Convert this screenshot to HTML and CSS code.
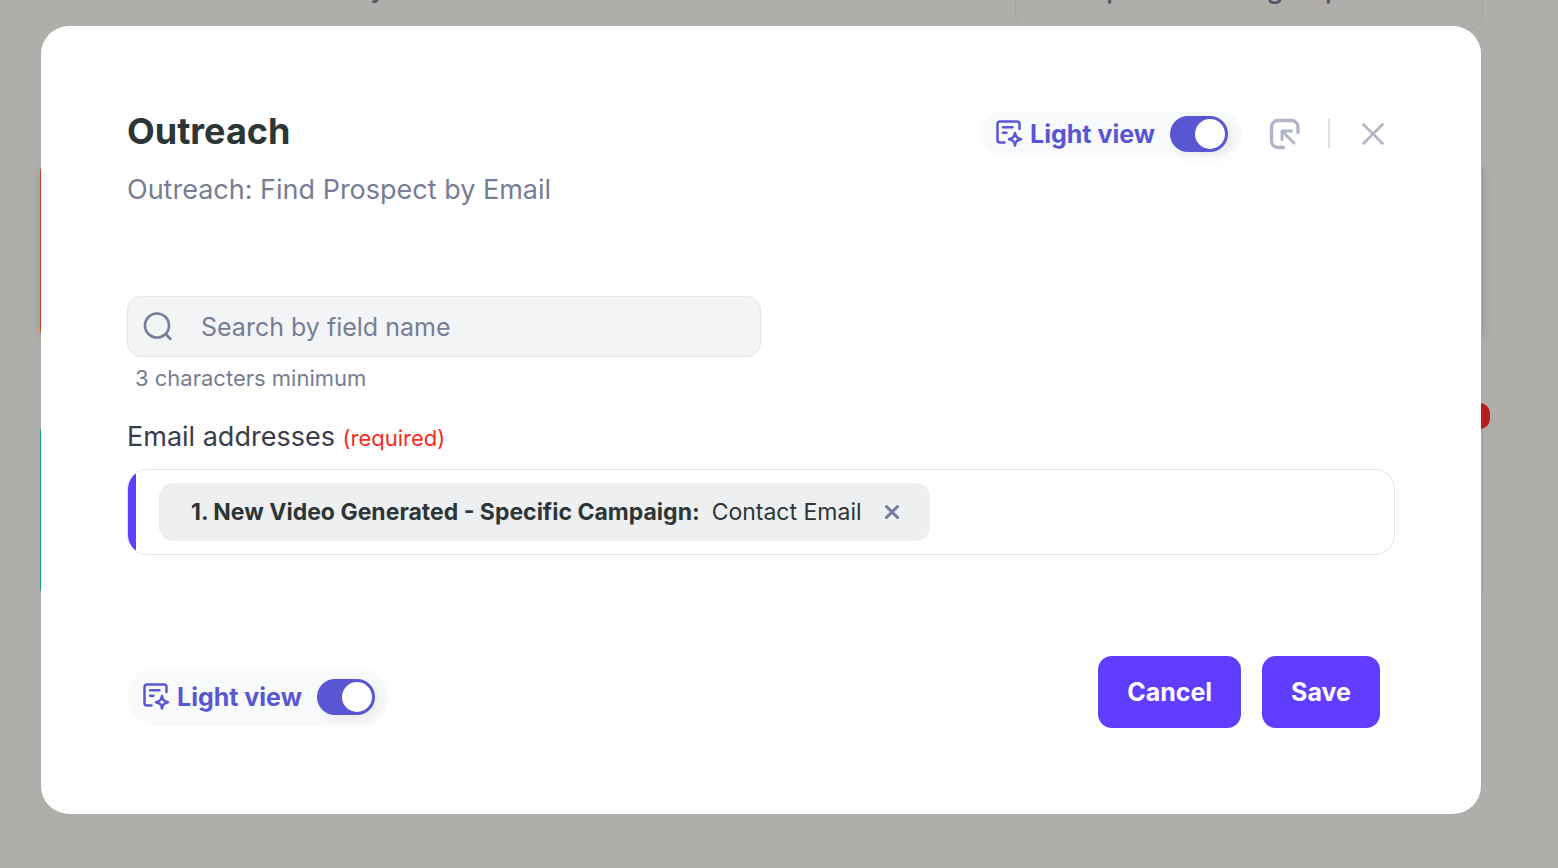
FILE: index.html
```html
<!DOCTYPE html>
<html lang="en">
<head>
  <meta charset="UTF-8">
  <title>Outreach</title>
  <meta name="viewport" content="width=device-width, initial-scale=1.0">
  <link rel="stylesheet" href="styles.css">
</head>
<body>

  <!-- page behind the dialog -->
  <div class="backdrop" aria-hidden="true">
    <div class="page-title">y</div>
    <div class="hint-card"><span>p</span><span>g</span><span>p</span></div>
    <div class="step step-trigger"></div>
    <div class="step step-action"></div>
    <div class="error-badge"></div>
  </div>

  <main class="modal" role="dialog" aria-labelledby="title">
    <header class="modal-header">
      <div>
        <h1 id="title">Outreach</h1>
        <p class="subtitle">Outreach: Find Prospect by Email</p>
      </div>
      <div class="header-tools">
        <label class="light-view">
          <svg class="view-icon" viewBox="0 0 28 28" fill="none" stroke="currentColor" stroke-width="2.5" stroke-linecap="round" stroke-linejoin="round">
            <path d="M9.500 22.500H5A2.500 2.500 0 0 1 2.500 20V4A2.500 2.500 0 0 1 5 1.500H22A2.500 2.500 0 0 1 24.500 4V9"/>
            <path d="M8 7.300H17.500M8 12.800H11.500"/>
            <path d="M20 13C20.800 17 21.800 18.200 26 19.200C21.800 20.200 20.800 21.400 20 25.400C19.200 21.400 18.200 20.200 14 19.200C18.200 18.200 19.200 17 20 13Z"/>
          </svg>
          <span>Light view</span>
          <input type="checkbox" class="switch" checked>
        </label>
        <button type="button" class="icon-btn dock-btn" aria-label="Dock window">
          <svg width="32" height="32" viewBox="0 0 32 32" fill="none" stroke="currentColor" stroke-width="3.400" stroke-linecap="round" stroke-linejoin="round">
            <path d="M14.500 29.500H9A6.500 6.500 0 0 1 2.500 23V9A6.500 6.500 0 0 1 9 2.500H22.500A6.500 6.500 0 0 1 29 9V14.500"/>
            <path d="M13 21.500V13H22.500M13.500 13.500L25 25" stroke-width="3"/>
          </svg>
        </button>
        <span class="divider"></span>
        <button type="button" class="icon-btn" aria-label="Close">
          <svg width="24" height="24" viewBox="0 0 24 24" fill="none" stroke="currentColor" stroke-width="2.600" stroke-linecap="round">
            <path d="M2.500 2.500L21.500 21.500M21.500 2.500L2.500 21.500"/>
          </svg>
        </button>
      </div>
    </header>

    <div class="search">
      <svg width="32" height="32" viewBox="0 0 32 32" fill="none" stroke="currentColor" stroke-width="2.600" stroke-linecap="round">
        <circle cx="15" cy="14.500" r="12"/>
        <path d="M23.500 23L28.500 28"/>
      </svg>
      <input type="search" id="search" placeholder="Search by field name" aria-label="Search by field name">
    </div>
    <p class="hint">3 characters minimum</p>

    <div class="field-label" id="email-label">Email addresses <span class="required">(required)</span></div>
    <div class="field" role="group" aria-labelledby="email-label">
      <div class="chip">
        <strong>1. New Video Generated - Specific Campaign:</strong>
        <span>Contact Email</span>
        <button type="button" class="chip-remove" aria-label="Remove">
          <svg width="16" height="16" viewBox="0 0 16 16" fill="none" stroke="currentColor" stroke-width="3" stroke-linecap="round">
            <path d="M2.500 2.500L13.500 13.500M13.500 2.500L2.500 13.500"/>
          </svg>
        </button>
      </div>
    </div>

    <footer class="modal-footer">
      <label class="light-view light-view-tall">
        <svg class="view-icon" viewBox="0 0 28 28" fill="none" stroke="currentColor" stroke-width="2.5" stroke-linecap="round" stroke-linejoin="round">
          <path d="M9.500 22.500H5A2.500 2.500 0 0 1 2.500 20V4A2.500 2.500 0 0 1 5 1.500H22A2.500 2.500 0 0 1 24.500 4V9"/>
          <path d="M8 7.300H17.500M8 12.800H11.500"/>
          <path d="M20 13C20.800 17 21.800 18.200 26 19.200C21.800 20.200 20.800 21.400 20 25.400C19.200 21.400 18.200 20.200 14 19.200C18.200 18.200 19.200 17 20 13Z"/>
        </svg>
        <span>Light view</span>
        <input type="checkbox" class="switch" checked>
      </label>
      <div class="actions">
        <button type="button" class="btn">Cancel</button>
        <button type="button" class="btn">Save</button>
      </div>
    </footer>
  </main>

</body>
</html>
```
FILE: styles.css
```css
* {
  box-sizing: border-box;
}

body {
  margin: 0;
  padding: 26px 77px 54px 41px;
  background: #b0aeaa;
  font-family: Inter, sans-serif;
  color: #2d3636;
}

h1,
p {
  margin: 0;
}

button {
  font-family: inherit;
  border: 0;
  cursor: pointer;
}

svg {
  display: block;
  flex: none;
}

/* page behind */
.backdrop {
  position: absolute;
  inset: 0;
  overflow: hidden;
  color: #535867;
  font-size: 28px;
  font-weight: 500;
  line-height: 32px;
}

.page-title {
  position: absolute;
  top: -29px;
  left: 370px;
}

.hint-card {
  position: absolute;
  top: -40px;
  left: 1015px;
  right: 75px;
  height: 72px;
  padding: 11px 140px 0 90px;
  display: flex;
  justify-content: space-between;
  border: 1px solid #a2a3a3;
  border-radius: 20px;
}

.hint-card span:nth-child(2) {
  margin-left: 102px;
}

.step {
  position: absolute;
  left: 40px;
  right: 75px;
  border: 1px solid #979797;
  border-radius: 8px;
}

.step-trigger {
  top: 164px;
  height: 174px;
  border-left: 4px solid #c2411d;
  box-shadow: 0 2px 10px rgba(80, 60, 60, 0.2);
}

.step-action {
  top: 424px;
  height: 172px;
  border-left: 4px solid #179b85;
}

.error-badge {
  position: absolute;
  top: 403px;
  right: 68px;
  width: 30px;
  height: 26px;
  border-radius: 10px;
  background: #b52020;
}

/* dialog */
.modal {
  position: relative;
  padding: 84px 86px 86px;
  background: #fff;
  border-radius: 28px;
}

.modal-header {
  display: flex;
  justify-content: space-between;
  align-items: flex-start;
}

h1 {
  font-size: 36px;
  font-weight: 700;
  line-height: 42px;
}

.subtitle {
  margin-top: 20px;
  font-size: 27px;
  line-height: 36px;
  color: #777d94;
}

.header-tools {
  display: flex;
  align-items: center;
  margin-top: 2px;
  padding-right: 10px;
}

.light-view {
  display: flex;
  align-items: center;
  height: 43px;
  padding: 0 14px 0 15px;
  border-radius: 30px;
  background: #f9fafc;
  color: #5956d4;
  font-size: 25px;
  font-weight: 700;
  line-height: 32px;
  cursor: pointer;
}

.light-view-tall {
  height: 58px;
  margin-bottom: 2px;
}

.view-icon {
  width: 28px;
  height: 28px;
  margin-right: 7px;
}

.switch {
  appearance: none;
  width: 58px;
  height: 36px;
  margin: 0 0 0 15px;
  padding: 3px;
  display: flex;
  border-radius: 18px;
  background: #5956d4;
  box-shadow: 4px 4px 12px rgba(90, 80, 100, 0.1);
  cursor: pointer;
}

.switch::before {
  content: "";
  width: 30px;
  height: 30px;
  border-radius: 50%;
  background: #fff;
}

.switch:checked {
  justify-content: flex-end;
}

.icon-btn {
  padding: 0;
  background: none;
  color: #b2b5c8;
}

.dock-btn {
  margin-left: 27px;
}

.divider {
  width: 2px;
  height: 29px;
  margin: 0 31px 0 27px;
  background: #dde0e6;
}

.search {
  display: flex;
  align-items: center;
  width: 50%;
  height: 61px;
  margin-top: 88px;
  padding: 0 14px;
  border: 1px solid #e4e5e9;
  border-radius: 14px;
  background: #f3f4f6;
  color: #777d94;
}

.search input {
  flex: 1;
  min-width: 0;
  margin-left: 27px;
  padding: 0;
  border: 0;
  outline: 0;
  background: none;
  font-family: inherit;
  font-size: 25px;
  line-height: 36px;
  color: inherit;
}

.search input::placeholder {
  color: #777d94;
}

.hint {
  margin-top: 7px;
  padding-left: 8px;
  font-size: 22px;
  line-height: 28px;
  color: #777d94;
}

.field-label {
  margin-top: 27px;
  font-size: 27px;
  line-height: 36px;
  color: #3a3c4c;
}

.required {
  font-size: 22px;
  line-height: 22px;
  color: #fa2a20;
}

.field {
  position: relative;
  margin-top: 14px;
  padding: 13px 31px;
  border: 1px solid #e4e5e9;
  border-radius: 20px;
  overflow: hidden;
}

.field::before {
  content: "";
  position: absolute;
  top: 0;
  bottom: 0;
  left: 0;
  width: 8px;
  background: #613dff;
}

.chip {
  display: inline-flex;
  align-items: center;
  height: 58px;
  padding: 0 30px 0 32px;
  border-radius: 14px;
  background: #eeeff1;
  font-size: 23px;
  line-height: 32px;
  vertical-align: top;
}

.chip strong {
  margin-right: 12px;
  font-weight: 700;
}

.chip-remove {
  margin-left: 22px;
  padding: 0;
  background: none;
  color: #777d94;
}

.modal-footer {
  display: flex;
  justify-content: space-between;
  align-items: flex-end;
  margin-top: 101px;
  padding-right: 15px;
}

.actions {
  display: flex;
  gap: 21px;
}

.btn {
  height: 72px;
  padding: 0 29px;
  border-radius: 14px;
  background: #613dff;
  color: #fff;
  font-size: 25px;
  font-weight: 700;
}
```
